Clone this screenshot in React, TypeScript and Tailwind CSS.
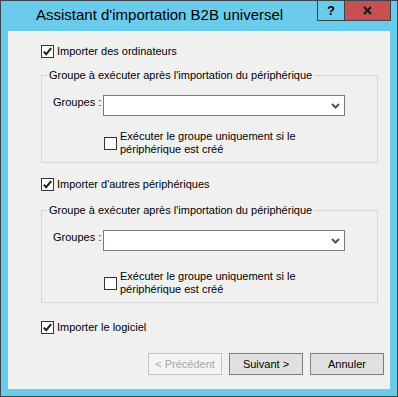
import React from 'react';

const Check = ({ checked }: { checked?: boolean }) => (
  <span className="w-[13px] h-[13px] shrink-0 bg-white border border-[#333333] flex items-center justify-center">
    {checked && (
      <svg width="11" height="11" viewBox="0 0 11 11">
        <path d="M1.8 5.6 L4.2 8.2 L9.2 2.2" fill="none" stroke="#222" strokeWidth="2.1" />
      </svg>
    )}
  </span>
);

const CheckRow = ({ label, checked }: { label: string; checked?: boolean }) => (
  <div className="flex items-start gap-[3px] h-[13px]">
    <Check checked={checked} />
    <span className="leading-[13px]">{label}</span>
  </div>
);

const Select = () => (
  <div className="w-[242px] h-[21px] bg-white border border-[#7a7a7a] flex items-center justify-end pr-[4px]">
    <svg width="9" height="6" viewBox="0 0 9 6">
      <path d="M1 1 L4.5 4.5 L8 1" fill="none" stroke="#555" strokeWidth="2" />
    </svg>
  </div>
);

const Group = ({ rowGap }: { rowGap: string }) => (
  <fieldset className="w-[337px] border border-[#d5d5d5] pb-[6px] ml-[33px]">
    <legend className="ml-[5px] px-[2px] leading-[13px]">
      Groupe à exécuter après l'importation du périphérique
    </legend>
    <div className="flex items-start pl-[11px] mt-[13px]">
      <span className="w-[50px] pt-[1px] leading-[13px]">Groupes :</span>
      <Select />
    </div>
    <div className={`flex items-center gap-[3px] ml-[62px] ${rowGap}`}>
      <Check />
      <span className="w-[185px] leading-[13px]">
        Exécuter le groupe uniquement si le périphérique est créé
      </span>
    </div>
  </fieldset>
);

const Btn = ({ children, disabled }: { children: React.ReactNode; disabled?: boolean }) => (
  <button
    className={
      disabled
        ? 'w-[74px] h-[22px] border border-[#c4c4c4] bg-[#f4f4f4] text-[#a6a6a6] leading-[13px]'
        : 'w-[74px] h-[22px] border border-[#7d7d7d] bg-[#e1e1e1] text-black leading-[13px]'
    }
  >
    {children}
  </button>
);

export default function App() {
  return (
    <div className="w-[398px] h-[397px] bg-[#6bcbeb] border border-[#3b464c] flex flex-col font-['Liberation_Sans',Arial,sans-serif] text-[11px] text-black">
      <div className="h-[30px] flex items-start shrink-0">
        <span className="pl-[35px] pt-[5px] text-[15px] leading-[18px]">
          Assistant d'importation B2B universel
        </span>
        <div className="ml-auto mr-[6px] flex">
          <div className="w-[28px] h-[20px] border-l border-r border-b border-[#3b464c] flex items-center justify-center font-bold text-[13px]">
            ?
          </div>
          <div className="w-[46px] h-[20px] bg-[#c75050] border-r border-b border-[#3b464c] flex items-center justify-center">
            <svg width="9" height="9" viewBox="0 0 9 9">
              <path d="M1 1 L8 8 M8 1 L1 8" stroke="#1a1a1a" strokeWidth="2.2" />
            </svg>
          </div>
        </div>
      </div>
      <div className="mx-[7px] h-[358px] bg-[#f0f0f0] flex flex-col">
        <div className="ml-[33px] mt-[14px]">
          <CheckRow checked label="Importer des ordinateurs" />
        </div>
        <div className="mt-[11px]">
          <Group rowGap="mt-[14px]" />
        </div>
        <div className="ml-[33px] mt-[15px]">
          <CheckRow checked label="Importer d'autres périphériques" />
        </div>
        <div className="mt-[13px]">
          <Group rowGap="mt-[19px]" />
        </div>
        <div className="ml-[33px] mt-[18px]">
          <CheckRow checked label="Importer le logiciel" />
        </div>
        <div className="mt-[19px] flex justify-end gap-[7px] pr-[6px]">
          <Btn disabled>&lt; Précédent</Btn>
          <Btn>Suivant &gt;</Btn>
          <Btn>Annuler</Btn>
        </div>
      </div>
    </div>
  );
}
